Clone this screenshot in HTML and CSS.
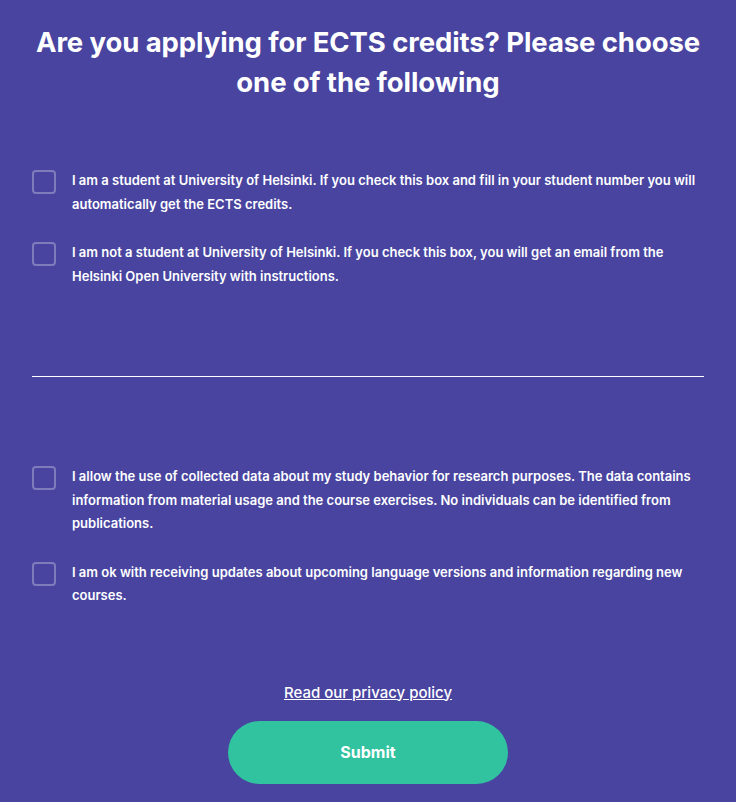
FILE: index.html
```html
<!DOCTYPE html>
<html>
<head>
<meta charset="utf-8">
<link rel="stylesheet" href="styles.css">
</head>
<body>
<main class="page">
  <h1 class="title">Are you applying for ECTS credits? Please choose one of the following</h1>
  <section class="group group-ects">
    <label class="option">
      <span class="box"></span>
      <span class="text">I am a student at University of Helsinki. If you check this box and fill in your student number you will automatically get the ECTS credits.</span>
    </label>
    <label class="option">
      <span class="box"></span>
      <span class="text">I am not a student at University of Helsinki. If you check this box, you will get an email from the Helsinki Open University with instructions.</span>
    </label>
  </section>
  <hr class="divider">
  <section class="group group-consent">
    <label class="option">
      <span class="box"></span>
      <span class="text">I allow the use of collected data about my study behavior for research purposes. The data contains information from material usage and the course exercises. No individuals can be identified from publications.</span>
    </label>
    <label class="option">
      <span class="box"></span>
      <span class="text">I am ok with receiving updates about upcoming language versions and information regarding new courses.</span>
    </label>
  </section>
  <div class="footer">
    <a class="privacy" href="#">Read our privacy policy</a>
    <button class="submit" type="button">Submit</button>
  </div>
</main>
</body>
</html>
```
FILE: styles.css
```css
html, body {
  margin: 0;
  padding: 0;
  background: #4844a0;
}
body {
  font-family: Inter, "Open Sans", sans-serif;
  color: #ffffff;
  width: 736px;
  height: 802px;
  overflow: hidden;
}
.page {
  padding: 0 32px;
}
.title {
  margin: 0;
  padding-top: 22px;
  font-size: 27.5px;
  line-height: 40px;
  font-weight: 700;
  text-align: center;
  letter-spacing: -0.1px;
}
.group {
  display: flex;
  flex-direction: column;
  gap: 25px;
}
.group-ects {
  padding-top: 67px;
}
.option {
  display: flex;
  align-items: flex-start;
  gap: 16px;
}
.box {
  flex: none;
  width: 20px;
  height: 20px;
  margin-top: 1px;
  border: 2px solid rgba(255, 255, 255, 0.3);
  border-radius: 4px;
}
.text {
  font-size: 13px;
  font-weight: 600;
  line-height: 23.5px;
}
.divider {
  margin: 88px 0 0;
  border: 0;
  border-top: 1px solid #ffffff;
}
.group-consent {
  padding-top: 88px;
}
.footer {
  display: flex;
  flex-direction: column;
  align-items: center;
  padding-top: 75px;
}
.privacy {
  color: #ffffff;
  font-size: 15px;
  font-weight: 500;
  line-height: 20px;
  text-decoration: underline;
}
.submit {
  margin-top: 18px;
  width: 280px;
  height: 63px;
  border: 0;
  border-radius: 32px;
  background: #31c3a0;
  color: #ffffff;
  font-family: Inter, sans-serif;
  font-size: 16px;
  font-weight: 700;
}
```
